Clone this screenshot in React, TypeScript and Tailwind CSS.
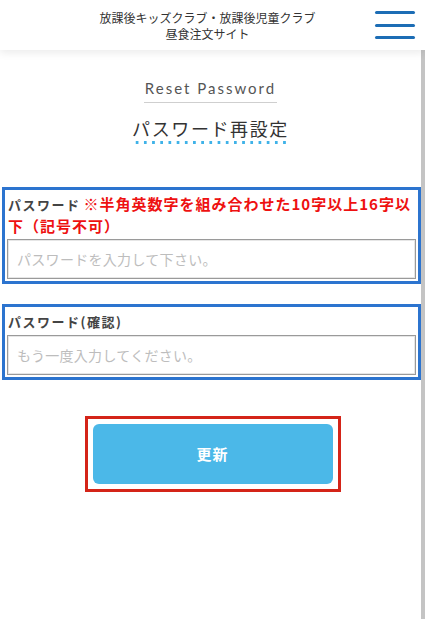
import React from "react";

const JP = "font-['Noto_Sans_CJK_JP','Noto_Sans',sans-serif]";

function Header() {
  return (
    <header className="relative z-10 h-[50px] bg-white shadow-[0_3px_8px_rgba(0,0,0,0.08)] flex items-center">
      <div className="flex-1" />
      <div className={`${JP} text-[12px] leading-[16px] text-[#333] text-center pt-[2px]`}>
        <p>放課後キッズクラブ・放課後児童クラブ</p>
        <p>昼食注文サイト</p>
      </div>
      <div className="flex-1 flex justify-end pr-[10px]">
        <button aria-label="menu" className="w-[40px] h-[30px] flex flex-col justify-between py-[1px]">
          <span className="block h-[3px] w-full bg-[#1c6db5] rounded-full" />
          <span className="block h-[3px] w-full bg-[#1c6db5] rounded-full" />
          <span className="block h-[3px] w-full bg-[#1c6db5] rounded-full" />
        </button>
      </div>
    </header>
  );
}

function Field({
  label,
  note,
  placeholder,
}: {
  label: string;
  note?: string;
  placeholder: string;
}) {
  return (
    <div className="ml-[2px] border-[3px] border-[#2c74cf] px-[2px] pt-[3px] pb-[2px]">
      <p className={`${JP} font-bold leading-[20px] px-[1px] mb-[3px]`}>
        <span className="text-[13px] tracking-[1.5px] text-[#444]">{label}</span>
        {note && (
          <span className="ml-[3px] text-[15px] tracking-[1px] text-[#ee1111]">{note}</span>
        )}
      </p>
      <input
        type="password"
        placeholder={placeholder}
        className={`${JP} block w-full h-[40px] border border-[#9a9a9a] shadow-[inset_0_0_0_1px_#e6e6e6] px-[9px] text-[14px] tracking-[0.3px] text-[#333] placeholder:text-[#bdbdbd] outline-none`}
      />
    </div>
  );
}

export default function App() {
  return (
    <div className="min-h-screen bg-white flex flex-col">
      <Header />
      <div className="flex flex-1">
        <main className="flex-1 pb-10">
          {/* Title */}
          <div className="flex flex-col items-center pt-[29px]">
            <p className="font-['Lato','Liberation_Sans',sans-serif] text-[15px] leading-[18px] tracking-[2px] text-[#555] pb-[5px] px-[1px] border-b border-[#cfcfcf]">
              Reset Password
            </p>
            <div className="mt-[14px] flex flex-col items-center">
              <h1 className={`${JP} text-[18px] leading-[22px] tracking-[1.6px] text-[#333] px-[1px]`}>
                パスワード再設定
              </h1>
              <span className="block mt-[2px] h-[3px] w-[156px] bg-[radial-gradient(circle,#3fb2e8_1.4px,transparent_1.6px)] bg-[length:8.2px_3px] bg-repeat-x" />
            </div>
          </div>

          <form className="mt-[43px] flex flex-col gap-[20px]" onSubmit={(e) => e.preventDefault()}>
            <Field
              label="パスワード"
              note="※半角英数字を組み合わせた10字以上16字以下（記号不可）"
              placeholder="パスワードを入力して下さい。"
            />
            <Field label="パスワード(確認)" placeholder="もう一度入力してください。" />

            <div className="flex justify-center mt-[16px] pl-[4px]">
              <div className="border-[3px] border-[#d42418] p-[5px]">
                <button
                  type="submit"
                  className={`${JP} w-[240px] h-[60px] rounded-[6px] bg-[#4bb8e8] text-white text-[15px] font-bold tracking-[1px]`}
                >
                  更新
                </button>
              </div>
            </div>
          </form>
        </main>
        <aside className="w-[4px] bg-[#c4c4c4]" />
      </div>
    </div>
  );
}
